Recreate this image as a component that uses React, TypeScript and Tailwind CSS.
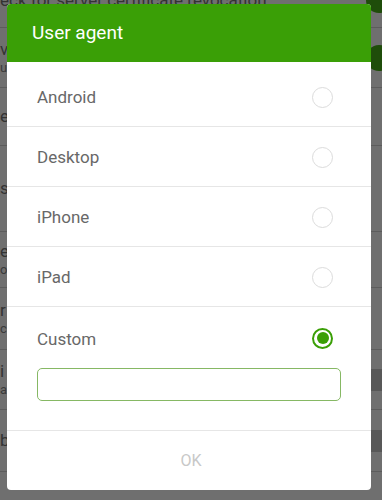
import React from "react";

const font = { fontFamily: "Roboto, 'Noto Sans', sans-serif" };

function BgRow({ title, sub, h, toggle }: { title: string; sub?: string; h: string; toggle?: "on" | "off" }) {
  return (
    <div className={`flex items-center justify-between border-b border-[#5c5c5c] ${h}`}>
      <div className="flex flex-col leading-tight">
        <span className="text-[17px] text-[#333333] whitespace-nowrap">{title}</span>
        {sub && <span className="text-[13px] text-[#3a3a3a] whitespace-nowrap">{sub}</span>}
      </div>
      {toggle === "on" && <div className="w-[26px] h-[26px] rounded-full bg-[#1f4d0a] mr-[-10px]" />}
      {toggle === "off" && <div className="w-[30px] h-[22px] rounded-l-full bg-[#585858] mr-[-8px]" />}
    </div>
  );
}

function Radio({ checked }: { checked?: boolean }) {
  if (checked) {
    return (
      <div className="w-[21px] h-[21px] rounded-full border-2 border-[#3a9f06] flex items-center justify-center">
        <div className="w-[12px] h-[12px] rounded-full bg-[#3a9f06]" />
      </div>
    );
  }
  return <div className="w-[21px] h-[21px] rounded-full border-[1.5px] border-[#dcdcdc]" />;
}

function Row({ label }: { label: string }) {
  return (
    <div className="h-[60px] flex items-center justify-between pl-[30px] pr-[38px] pt-[3px] border-b border-[#e6e6e6]">
      <span className="text-[17px] text-[#686868]">{label}</span>
      <div className="-mt-[1px]">
        <Radio />
      </div>
    </div>
  );
}

export default function App() {
  return (
    <div className="relative w-[382px] h-[500px] overflow-hidden bg-[#6f6f6f]" style={font}>
      <div className="flex flex-col">
        <div className="h-[28px] flex items-end justify-between border-b border-[#5c5c5c]">
          <span className="text-[17px] text-[#333333] leading-none mb-[18px] whitespace-nowrap">eck for server certificate revocation</span>
          <div className="w-[26px] h-[26px] rounded-full bg-[#1f4d0a] mr-[-10px] mb-[14px]" />
        </div>
        <BgRow h="h-[60px]" title="v" sub="u" toggle="on" />
        <BgRow h="h-[58px]" title="e" />
        <BgRow h="h-[86px]" title="st" />
        <BgRow h="h-[56px]" title="er" sub="o" />
        <BgRow h="h-[62px]" title="r" sub="ch" />
        <BgRow h="h-[60px]" title="i" sub="a" toggle="off" />
        <BgRow h="h-[62px]" title="b" toggle="off" />
        <div className="h-[40px] flex items-end justify-between">
          <span className="text-[17px] text-[#333333] leading-none mb-[-8px] whitespace-nowrap">ble Dolphin notification</span>
          <div className="w-[26px] h-[26px] rounded-full bg-[#1f4d0a] mr-[-8px] mb-[-16px]" />
        </div>
      </div>

      <div className="absolute left-[7px] top-[4px] w-[364px] h-[486px] bg-white rounded-[4px] overflow-hidden flex flex-col">
        <div className="h-[58px] bg-[#3a9f06] flex items-center pl-[25px] pt-[1px]">
          <span className="text-[19px] text-white">User agent</span>
        </div>
        <div className="h-[5px]" />
        <Row label="Android" />
        <Row label="Desktop" />
        <Row label="iPhone" />
        <Row label="iPad" />
        <div className="h-[124px] flex flex-col border-b border-[#e6e6e6] pl-[30px] pr-[30px]">
          <div className="flex items-center justify-between h-[41px] pt-[21px] pr-[8px]">
            <span className="text-[17px] text-[#686868] mt-[4px]">Custom</span>
            <Radio checked />
          </div>
          <div className="mt-[20px] h-[33px] w-[304px] rounded-[5px] border-[1.5px] border-[#86b864]" />
        </div>
        <div className="flex-1 flex items-center justify-center pl-[4px]">
          <span className="text-[16px] text-[#c8c8c8]">OK</span>
        </div>
      </div>
    </div>
  );
}
